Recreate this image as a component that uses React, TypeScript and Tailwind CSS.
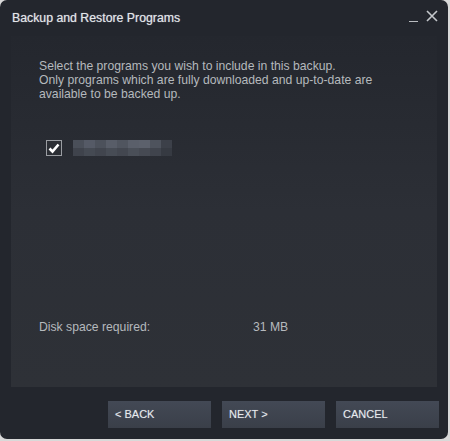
import React from 'react';

const blur = [
  ['#4a4f59', '#555a66', '#4c515b', '#585d68', '#50555f', '#5a5f6a', '#5c616c', '#4e535d', '#3c4049'],
  ['#3f434c', '#454a53', '#41454e', '#474c55', '#434750', '#4a4f58', '#464a53', '#40444d', '#363a42'],
];

export default function App() {
  return (
    <div className="w-[450px] h-[441px] bg-[#d9d9d9]" style={{ fontFamily: '"Liberation Sans", Arial, sans-serif' }}>
      <div className="w-[448px] h-[439px] rounded-[7px] bg-[#23262d] flex flex-col overflow-hidden">
        {/* title bar */}
        <div className="h-[36px] flex items-start justify-between pl-3 pr-2.5 pt-[9px]">
          <span className="text-[12.3px] text-[#e4e6e8] [text-shadow:0_0_1px_rgba(220,230,255,0.6)]">Backup and Restore Programs</span>
          <div className="flex items-start gap-2 pt-px">
            <div className="w-[9px] h-px bg-[#b9bcc0] mt-[11px]" />
            <svg width="12" height="12" viewBox="0 0 12 12" className="text-[#c4c7cb]">
              <path d="M1 1L11 11M11 1L1 11" stroke="currentColor" strokeWidth="1.6" />
            </svg>
          </div>
        </div>

        {/* content panel */}
        <div className="mx-[11px] h-[351px] bg-gradient-to-b from-[#24272e] via-[#2c2f36] to-[#2e3137] flex flex-col px-7 pt-[23px]">
          <p className="text-[12.2px] leading-[14px] text-[#b5b9bd]">
            Select the programs you wish to include in this backup.
            <br />
            Only programs which are fully downloaded and up-to-date are
            <br />
            available to be backed up.
          </p>

          <div className="flex items-center gap-[11px] mt-[39px] ml-[7px]">
            <div className="w-4 h-4 border border-[#9a9da2] bg-[#2b2e34] flex items-center justify-center">
              <svg width="12" height="11" viewBox="0 0 12 11">
                <path d="M1.5 5.5L4.5 8.5L10.5 1.5" stroke="#ffffff" strokeWidth="2.6" fill="none" />
              </svg>
            </div>
            <div className="flex flex-col">
              {blur.map((row, i) => (
                <div key={i} className="flex">
                  {row.map((c, j) => (
                    <div key={j} className="w-[11px] h-2" style={{ background: c }} />
                  ))}
                </div>
              ))}
            </div>
          </div>

          <div className="flex text-[12.2px] text-[#b5b9bd] mt-[162px]">
            <span className="w-[214px]">Disk space required:</span>
            <span>31 MB</span>
          </div>
        </div>

        {/* buttons */}
        <div className="flex justify-end gap-[11px] pr-[9px] pt-[14px]">
          {['< BACK', 'NEXT >', 'CANCEL'].map((t) => (
            <button
              key={t}
              className="w-[103px] h-[27px] bg-gradient-to-b from-[#434955] to-[#3a3f49] text-[#e8eaec] text-[11px] text-left pl-[7px] [text-shadow:0_0_1px_rgba(200,220,255,0.4)]"
            >
              {t}
            </button>
          ))}
        </div>
      </div>
    </div>
  );
}
